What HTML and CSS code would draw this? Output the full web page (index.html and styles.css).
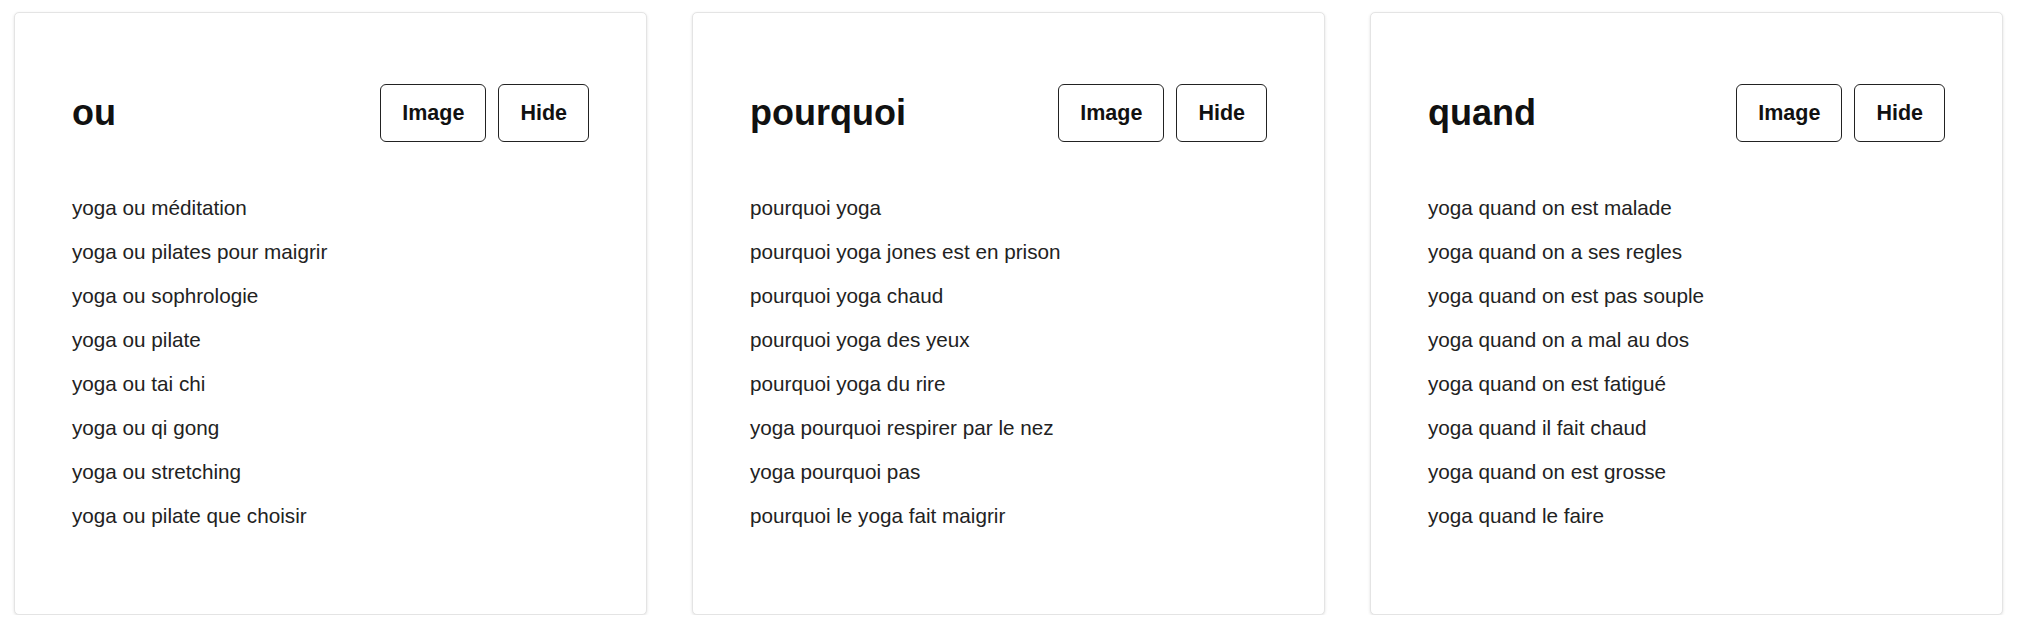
FILE: index.html
```html
<!DOCTYPE html>
<html lang="fr">
<head>
    <meta charset="UTF-8">
    <meta name="viewport" content="width=device-width, initial-scale=1.0">
    <title>Suggestions yoga</title>
    <link rel="stylesheet" href="styles.css">
</head>
<body>

    <div class="grid">
        <div class="card">
            <div class="card-head">
                <h2>ou</h2>
                <div class="actions">
                    <button>Image</button>
                    <button>Hide</button>
                </div>
            </div>
            <ul class="list">
                <li>yoga ou méditation</li>
                <li>yoga ou pilates pour maigrir</li>
                <li>yoga ou sophrologie</li>
                <li>yoga ou pilate</li>
                <li>yoga ou tai chi</li>
                <li>yoga ou qi gong</li>
                <li>yoga ou stretching</li>
                <li>yoga ou pilate que choisir</li>
            </ul>
        </div>

        <div class="card">
            <div class="card-head">
                <h2>pourquoi</h2>
                <div class="actions">
                    <button>Image</button>
                    <button>Hide</button>
                </div>
            </div>
            <ul class="list">
                <li>pourquoi yoga</li>
                <li>pourquoi yoga jones est en prison</li>
                <li>pourquoi yoga chaud</li>
                <li>pourquoi yoga des yeux</li>
                <li>pourquoi yoga du rire</li>
                <li>yoga pourquoi respirer par le nez</li>
                <li>yoga pourquoi pas</li>
                <li>pourquoi le yoga fait maigrir</li>
            </ul>
        </div>

        <div class="card">
            <div class="card-head">
                <h2>quand</h2>
                <div class="actions">
                    <button>Image</button>
                    <button>Hide</button>
                </div>
            </div>
            <ul class="list">
                <li>yoga quand on est malade</li>
                <li>yoga quand on a ses regles</li>
                <li>yoga quand on est pas souple</li>
                <li>yoga quand on a mal au dos</li>
                <li>yoga quand on est fatigué</li>
                <li>yoga quand il fait chaud</li>
                <li>yoga quand on est grosse</li>
                <li>yoga quand le faire</li>
            </ul>
        </div>
    </div>

</body>
</html>
```

FILE: styles.css
```css
* {
    margin: 0;
    padding: 0;
    box-sizing: border-box;
    font-family: "Liberation Sans", Arial, sans-serif;
}

body {
    background: #fff;
}

.grid {
    display: grid;
    grid-template-columns: repeat(3, 633px);
    column-gap: 45px;
    padding: 12px 0 0 14px;
}

.card {
    background: white;
    border: 1px solid #e4e4e4;
    border-radius: 5px;
    box-shadow: 0 1px 3px rgba(0, 0, 0, 0.12);
    padding: 71px 57px 76px 57px;
}

.card-head {
    display: flex;
    justify-content: space-between;
    align-items: center;
    height: 58px;
}

h2 {
    font-size: 36px;
    font-weight: bold;
    color: #111;
}

.actions {
    display: flex;
    gap: 12px;
}

button {
    height: 58px;
    padding: 0 21px;
    background: white;
    border: 1.5px solid #222;
    border-radius: 6px;
    font-size: 21.5px;
    font-weight: bold;
    color: #111;
    cursor: pointer;
}

.list {
    list-style: none;
    margin-top: 44px;
}

.list li {
    font-size: 20.7px;
    line-height: 44px;
    color: #222;
}
```
